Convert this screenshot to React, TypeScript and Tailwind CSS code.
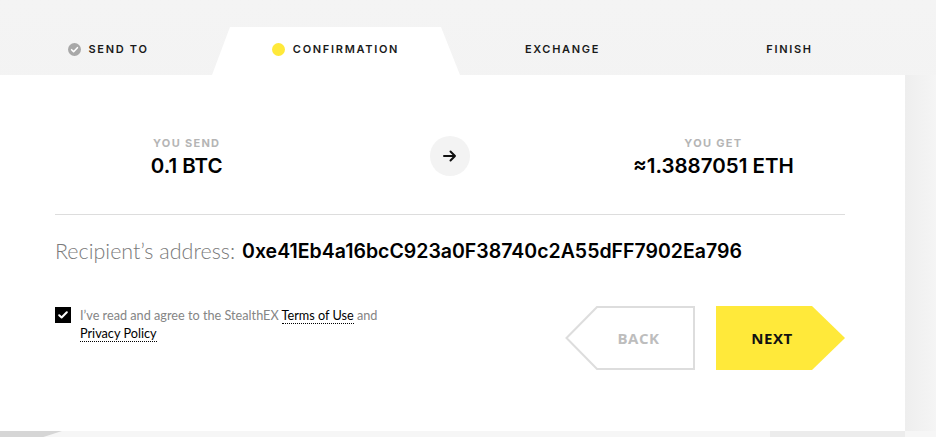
import React from 'react'

const steps = [
  { title: 'SEND TO', state: 'done' },
  { title: 'CONFIRMATION', state: 'active' },
  { title: 'EXCHANGE', state: 'todo' },
  { title: 'FINISH', state: 'todo' },
]

const DoneIcon = () => (
  <svg width="13" height="13" viewBox="0 0 13 13" className="mr-[7px]">
    <circle cx="6.5" cy="6.5" r="6.5" fill="#a8a8a8" />
    <path d="M3.6 6.7l2 2 3.8-4" fill="none" stroke="#fff" strokeWidth="1.6" strokeLinecap="round" strokeLinejoin="round" />
  </svg>
)

const StepTabs = () => (
  <div className="flex h-[75px] items-end ml-[-5px] w-[908px]">
    {steps.map((step) => {
      const isActive = step.state === 'active'
      return (
        <div key={step.title} className="relative flex-1 h-[48px] flex items-center justify-center pb-[4px]">
          {isActive && (
            <div className="absolute top-0 bottom-0 -left-[10px] -right-[11px] bg-white [clip-path:polygon(18px_0,calc(100%-19px)_0,100%_100%,0_100%)]" />
          )}
          <div className="relative flex items-center">
            {step.state === 'done' && <DoneIcon />}
            {isActive && <span className="w-[13px] h-[13px] rounded-full bg-[#ffe93a] mr-[8px]" />}
            <span className="text-[11px] font-semibold tracking-[1.7px] text-[#1a1a1a] font-['Inter',sans-serif]">
              {step.title}
            </span>
          </div>
        </div>
      )
    })}
  </div>
)

const Amount = ({ label, value }: { label: string; value: string }) => (
  <div className="flex flex-col items-center">
    <span className="text-[11px] font-bold tracking-[1.3px] text-[#b5b5b5] leading-[14px] font-['Inter',sans-serif]">
      {label}
    </span>
    <span className="text-[20.5px] font-semibold text-black leading-[26px] mt-[3px] font-['Inter',sans-serif]">
      {value}
    </span>
  </div>
)

const BackButton = () => (
  <button className="relative w-[130px] h-[64px] flex items-center justify-center pl-[17px]">
    <svg className="absolute inset-0" width="130" height="64" viewBox="0 0 130 64">
      <polygon points="1.5,32 32,1 129,1 129,63 32,63" fill="#fff" stroke="#dddddd" strokeWidth="2" />
    </svg>
    <span className="relative text-[15px] font-bold text-[#bdbdbd] tracking-[0.5px] font-['Open_Sans',sans-serif]">BACK</span>
  </button>
)

const NextButton = () => (
  <button className="relative w-[129px] h-[64px] flex items-center justify-center pr-[17px]">
    <svg className="absolute inset-0" width="129" height="64" viewBox="0 0 129 64">
      <polygon points="0,0 96,0 129,32 96,64 0,64" fill="#ffe93a" />
    </svg>
    <span className="relative text-[15px] font-bold text-[#111] tracking-[0.5px] font-['Open_Sans',sans-serif]">NEXT</span>
  </button>
)

export default function App() {
  return (
    <div className="relative w-[936px] h-[437px] overflow-hidden bg-[#f3f3f3] bg-gradient-to-b from-[#f4f4f4] to-[#f0f0f0]">
      <StepTabs />

      <div className="flex">
        {/* Card */}
        <div className="w-[905px] h-[356px] bg-white pl-[55px] pr-[60px]">
          {/* Amounts */}
          <div className="grid grid-cols-3 h-[140px] pt-[26px] items-center border-b border-[#dddddd]">
            <Amount label="YOU SEND" value="0.1 BTC" />
            <div className="flex justify-center pb-[4px]">
              <div className="w-[40px] h-[40px] rounded-full bg-[#f3f3f3] flex items-center justify-center">
                <svg width="14" height="12" viewBox="0 0 14 12">
                  <path d="M1 6h11M7.5 1.5L12 6l-4.5 4.5" fill="none" stroke="#111" strokeWidth="2" strokeLinecap="round" strokeLinejoin="round" />
                </svg>
              </div>
            </div>
            <Amount label="YOU GET" value="≈1.3887051 ETH" />
          </div>

          {/* Address */}
          <div className="mt-[24px] flex items-center leading-[24px]">
            <span className="text-[21.5px] font-light text-[#7a7a7a] font-['Lato',sans-serif]">Recipient’s address:</span>
            <span className="ml-[7px] text-[19.5px] font-semibold text-black font-['Inter',sans-serif]">
              0xe41Eb4a16bcC923a0F38740c2A55dFF7902Ea796
            </span>
          </div>

          {/* Agreement + buttons */}
          <div className="mt-[43px] flex justify-between items-start">
            <div className="flex items-start pt-[1px]">
              <div className="w-[16px] h-[16px] bg-black flex items-center justify-center shrink-0">
                <svg width="10" height="8" viewBox="0 0 10 8">
                  <path d="M1.2 4.2l2.4 2.3L8.8 1.3" fill="none" stroke="#fff" strokeWidth="2" strokeLinecap="round" strokeLinejoin="round" />
                </svg>
              </div>
              <p className="ml-[9px] w-[305px] text-[12.7px] leading-[18px] text-[#858585] font-['Lato',sans-serif] -mt-[1px]">
                I’ve read and agree to the StealthEX{' '}
                <a className="text-black border-b border-dotted border-black">Terms of Use</a> and{' '}
                <a className="text-black border-b border-dotted border-black">Privacy Policy</a>
              </p>
            </div>
            <div className="flex gap-[21px]">
              <BackButton />
              <NextButton />
            </div>
          </div>
        </div>
        <div className="flex-1 h-[356px] bg-gradient-to-r from-[#eeeeee] to-[#f5f5f5]" />
      </div>

      {/* Bottom strip */}
      <div className="relative h-[6px] bg-[#f6f6f6]">
        <div className="absolute left-0 top-0 h-[6px] w-[62px] bg-[#d6d6d6] [clip-path:polygon(0_0,100%_0,70%_100%,0_100%)]" />
        <div className="absolute left-[770px] top-0 h-[6px] w-[135px] bg-[#ececec]" />
      </div>
    </div>
  )
}
